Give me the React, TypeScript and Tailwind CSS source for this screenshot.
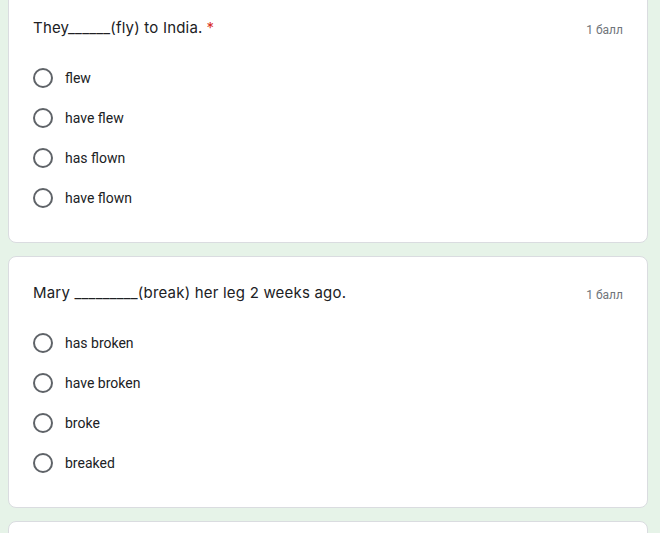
import React from "react";

type Q = { title: React.ReactNode; required?: boolean; options: string[] };

const questions: Q[] = [
  { title: "They______(fly) to India.", required: true, options: ["flew", "have flew", "has flown", "have flown"] },
  { title: "Mary _________(break) her leg 2 weeks ago.", options: ["has broken", "have broken", "broke", "breaked"] },
];

function Radio() {
  return <div className="w-5 h-5 rounded-full border-2 border-[#5f6368] shrink-0" />;
}

function Card({ q }: { q: Q }) {
  return (
    <div className="bg-white rounded-lg border border-[#dadce0] px-6 pt-6 pb-6">
      <div className="h-6 flex items-start justify-between">
        <div className="text-[15px] leading-6 text-[#202124] tracking-[0.2px]" style={{ fontFamily: "Inter, 'Open Sans', sans-serif" }}>
          {q.title}
          {q.required && <span className="text-[#d93025] ml-1">*</span>}
        </div>
        <div className="mt-[2px] text-[12px] leading-6 text-[#70757a]" style={{ fontFamily: "Roboto, sans-serif" }}>1 балл</div>
      </div>
      <div className="mt-[18px] flex flex-col">
        {q.options.map((o) => (
          <div key={o} className="h-10 flex items-center gap-3">
            <Radio />
            <span className="text-[14px] text-[#202124]" style={{ fontFamily: "Roboto, sans-serif" }}>{o}</span>
          </div>
        ))}
      </div>
    </div>
  );
}

export default function App() {
  return (
    <div className="w-[660px] h-[533px] overflow-hidden bg-[#e6f3e8]">
      <div className="-mt-[9px] ml-[8px] mr-[12px] flex flex-col gap-[13px]">
        {questions.map((q, i) => (
          <Card key={i} q={q} />
        ))}
        <div className="bg-white rounded-lg border border-[#dadce0] h-[100px]" />
      </div>
    </div>
  );
}
